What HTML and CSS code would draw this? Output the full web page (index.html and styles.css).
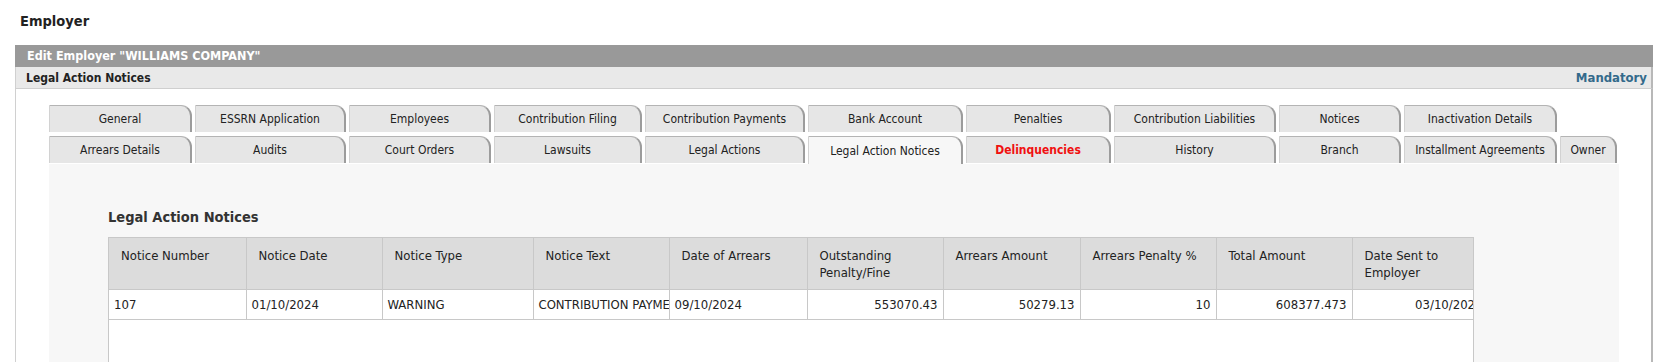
FILE: index.html
```html
<!DOCTYPE html>
<html lang="en">

<head>
    <meta charset="UTF-8">
    <meta name="viewport" content="width=device-width, initial-scale=1.0">
    <title>Employer - Legal Action Notices</title>
    <link rel="stylesheet" href="styles.css">
</head>

<body>
    <h1 class="page-title">Employer</h1>
    <div class="panel">
        <div class="panel-head">Edit Employer "WILLIAMS COMPANY"</div>
        <div class="panel-sub">
            <span>Legal Action Notices</span>
            <span class="mandatory">Mandatory</span>
        </div>
        <div class="panel-body">
            <!-- tabs share column widths across both rows -->
            <div class="tabs">
                <a class="tab">General</a>
                <a class="tab">ESSRN Application</a>
                <a class="tab">Employees</a>
                <a class="tab">Contribution Filing</a>
                <a class="tab">Contribution Payments</a>
                <a class="tab">Bank Account</a>
                <a class="tab">Penalties</a>
                <a class="tab">Contribution Liabilities</a>
                <a class="tab">Notices</a>
                <a class="tab">Inactivation Details</a>
                <span class="tab-empty"></span>

                <a class="tab">Arrears Details</a>
                <a class="tab">Audits</a>
                <a class="tab">Court Orders</a>
                <a class="tab">Lawsuits</a>
                <a class="tab">Legal Actions</a>
                <a class="tab active">Legal Action Notices</a>
                <a class="tab alert">Delinquencies</a>
                <a class="tab">History</a>
                <a class="tab">Branch</a>
                <a class="tab">Installment Agreements</a>
                <a class="tab">Owner</a>
            </div>
            <div class="tab-content">
                <h2 class="section-title">Legal Action Notices</h2>
                <div class="grid-wrap">
                    <table class="grid">
                        <colgroup>
                            <col style="width:137px">
                            <col style="width:136px">
                            <col style="width:151px">
                            <col style="width:136px">
                            <col style="width:138px">
                            <col style="width:136px">
                            <col style="width:137px">
                            <col style="width:136px">
                            <col style="width:136px">
                            <col style="width:136px">
                        </colgroup>
                        <thead>
                            <tr>
                                <th>Notice Number</th>
                                <th>Notice Date</th>
                                <th>Notice Type</th>
                                <th>Notice Text</th>
                                <th>Date of Arrears</th>
                                <th>Outstanding Penalty/Fine</th>
                                <th>Arrears Amount</th>
                                <th>Arrears Penalty %</th>
                                <th>Total Amount</th>
                                <th>Date Sent to Employer</th>
                            </tr>
                        </thead>
                        <tbody>
                            <tr>
                                <td>107</td>
                                <td>01/10/2024</td>
                                <td>WARNING</td>
                                <td>CONTRIBUTION PAYMENT OVERDUE</td>
                                <td>09/10/2024</td>
                                <td class="num">553070.43</td>
                                <td class="num">50279.13</td>
                                <td class="num">10</td>
                                <td class="num">608377.473</td>
                                <td class="num">03/10/2024</td>
                            </tr>
                        </tbody>
                    </table>
                </div>
            </div>
        </div>
    </div>
</body>

</html>
```

FILE: styles.css
```css
:root {
  --font-main: "DejaVu Sans Condensed", "DejaVu Sans", sans-serif;
  --color-text: #222;
  --color-line: #c8c8c8;
  --color-tab: #e6e6e6;
  --color-pane: #f7f7f7;
}
body {
  margin: 0;
  padding: 0;
  font-family: var(--font-main);
  font-stretch: condensed;
  color: var(--color-text);
  background-color: #fff;
}
.page-title {
  margin: 0;
  padding: 12px 20px 0;
  height: 33px;
  box-sizing: border-box;
  font-size: 14.5px;
  line-height: 18px;
  font-weight: bold;
  color: #222;
}
.panel {
  margin: 12px 0 0 15px;
  width: 1638px;
}
.panel-head {
  height: 22px;
  line-height: 22px;
  padding-left: 12px;
  background-color: #999;
  color: #fff;
  font-size: 12.5px;
  font-weight: bold;
}
.panel-sub {
  display: flex;
  align-items: center;
  justify-content: space-between;
  height: 21px;
  padding: 0 4px 0 10px;
  background-color: #e9e9e9;
  border-bottom: 1px solid #cfcfcf;
  border-left: 1px solid #d0d0d0;
  border-right: 2px solid #b8b8b8;
  font-size: 12px;
  font-weight: bold;
}
.panel-sub .mandatory {
  font-size: 13px;
  color: #336a8b;
}
.panel-body {
  padding: 16px 32px 0 33px;
  border-left: 1px solid #d0d0d0;
  border-right: 2px solid #b8b8b8;
  height: 320px;
  box-sizing: border-box;
}
.tabs {
  display: grid;
  grid-template-columns: 143px 151px 142px 148px 160px 155px 145px 162px 122px 153px 57px;
  column-gap: 3px;
  row-gap: 4px;
}
.tabs .tab {
  display: flex;
  align-items: center;
  justify-content: center;
  height: 27px;
  box-sizing: border-box;
  background-color: var(--color-tab);
  border-top: 1px solid #b4b4b4;
  border-left: 1px solid #d2d2d2;
  border-right: 2px solid #9c9c9c;
  border-top-right-radius: 11px;
  font-size: 12px;
  color: #222;
  white-space: nowrap;
  cursor: pointer;
}
.tabs .tab.active {
  height: 28px;
  background-color: var(--color-pane);
}
.tabs .tab.alert {
  color: #f01010;
  font-weight: bold;
}
.tab-content {
  width: 1570px;
  height: 260px;
  padding: 44px 0 0 59px;
  box-sizing: border-box;
  background-color: var(--color-pane);
}
.section-title {
  margin: 0 0 11px;
  font-size: 14.5px;
  line-height: 18px;
  font-weight: bold;
  color: #333;
}
.grid-wrap {
  width: 1366px;
  height: 180px;
  box-sizing: border-box;
  border: 1px solid var(--color-line);
  background-color: #fff;
  overflow: hidden;
}
.grid {
  table-layout: fixed;
  width: 1379px;
  border-collapse: collapse;
  font-size: 13px;
  line-height: 17px;
}
.grid th {
  padding: 9px 8px 8px 12px;
  text-align: left;
  vertical-align: top;
  font-weight: normal;
  background-color: #dcdcdc;
  border-right: 1px solid var(--color-line);
  border-bottom: 1px solid var(--color-line);
  height: 34px;
}
.grid td {
  padding: 6px 5px;
  height: 16px;
  white-space: nowrap;
  overflow: hidden;
  border-right: 1px solid var(--color-line);
  border-bottom: 1px solid var(--color-line);
}
.grid td.num {
  text-align: right;
}
```
